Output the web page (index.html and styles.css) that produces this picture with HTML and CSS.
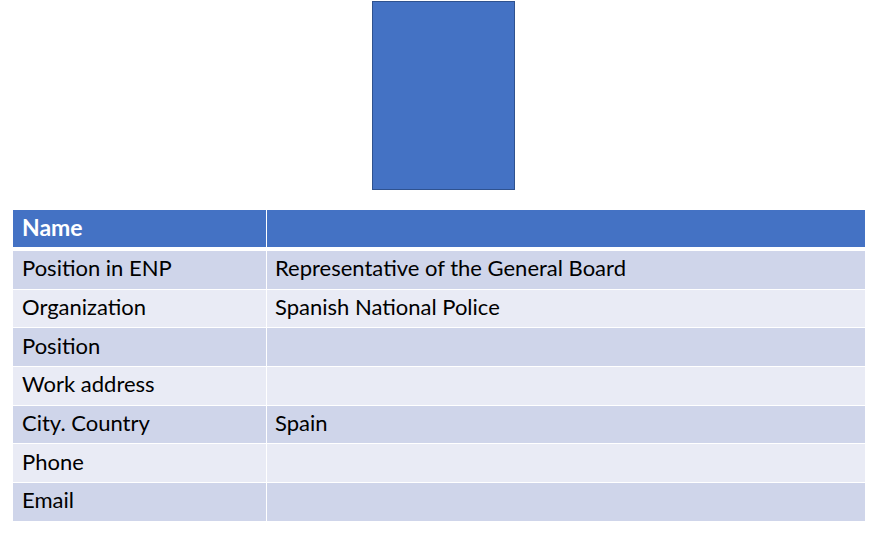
FILE: index.html
```html
<!DOCTYPE html>
<html lang="en">
<head>
<meta charset="utf-8">
<title>Member card</title>
<link rel="stylesheet" href="styles.css">
</head>
<body>
<div class="page">
  <div class="photo-row">
    <div class="photo"></div>
  </div>
  <table class="info">
    <thead>
      <tr><th class="key">Name</th><th class="val"></th></tr>
    </thead>
    <tbody>
      <tr class="odd"><td class="key">Position in ENP</td><td class="val">Representative of the General Board</td></tr>
      <tr class="even"><td class="key">Organization</td><td class="val">Spanish National Police</td></tr>
      <tr class="odd"><td class="key">Position</td><td class="val"></td></tr>
      <tr class="even"><td class="key">Work address</td><td class="val"></td></tr>
      <tr class="odd"><td class="key">City. Country</td><td class="val">Spain</td></tr>
      <tr class="even"><td class="key">Phone</td><td class="val"></td></tr>
      <tr class="odd"><td class="key">Email</td><td class="val"></td></tr>
    </tbody>
  </table>
</div>
</body>
</html>
```
FILE: styles.css
```css
html, body {
  margin: 0;
  padding: 0;
  background: #ffffff;
}
body {
  font-family: Lato, "Open Sans", "Liberation Sans", sans-serif;
  color: #000000;
}
.page {
  display: flex;
  flex-direction: column;
  width: 878px;
  height: 533px;
}
.photo-row {
  display: flex;
  padding-left: 372px;
  padding-top: 1px;
}
.photo {
  width: 141px;
  height: 187px;
  background: #4472c4;
  border: 1px solid #2f528f;
}
.info {
  margin-top: 20px;
  margin-left: 13px;
  width: 852px;
  border-collapse: collapse;
  table-layout: fixed;
  font-size: 22px;
  line-height: 1;
}
.info th, .info td {
  padding: 0 0 3px 9px;
  text-align: left;
  vertical-align: middle;
  white-space: nowrap;
  border: 1px solid #ffffff;
  border-top: none;
}
.info .key {
  width: 244px;
  border-left: none;
}
.info .val {
  border-right: none;
  padding-left: 8px;
}
.info thead th {
  background: #4472c4;
  color: #ffffff;
  font-weight: 700;
  font-size: 23px;
  height: 34px;
  border-bottom: 4px solid #ffffff;
}
.info tbody td {
  height: 34.7px;
}
.info tbody tr:last-child td {
  border-bottom: none;
}
.info tr.odd td {
  background: #cfd5ea;
}
.info tr.even td {
  background: #e9ebf5;
}
```
